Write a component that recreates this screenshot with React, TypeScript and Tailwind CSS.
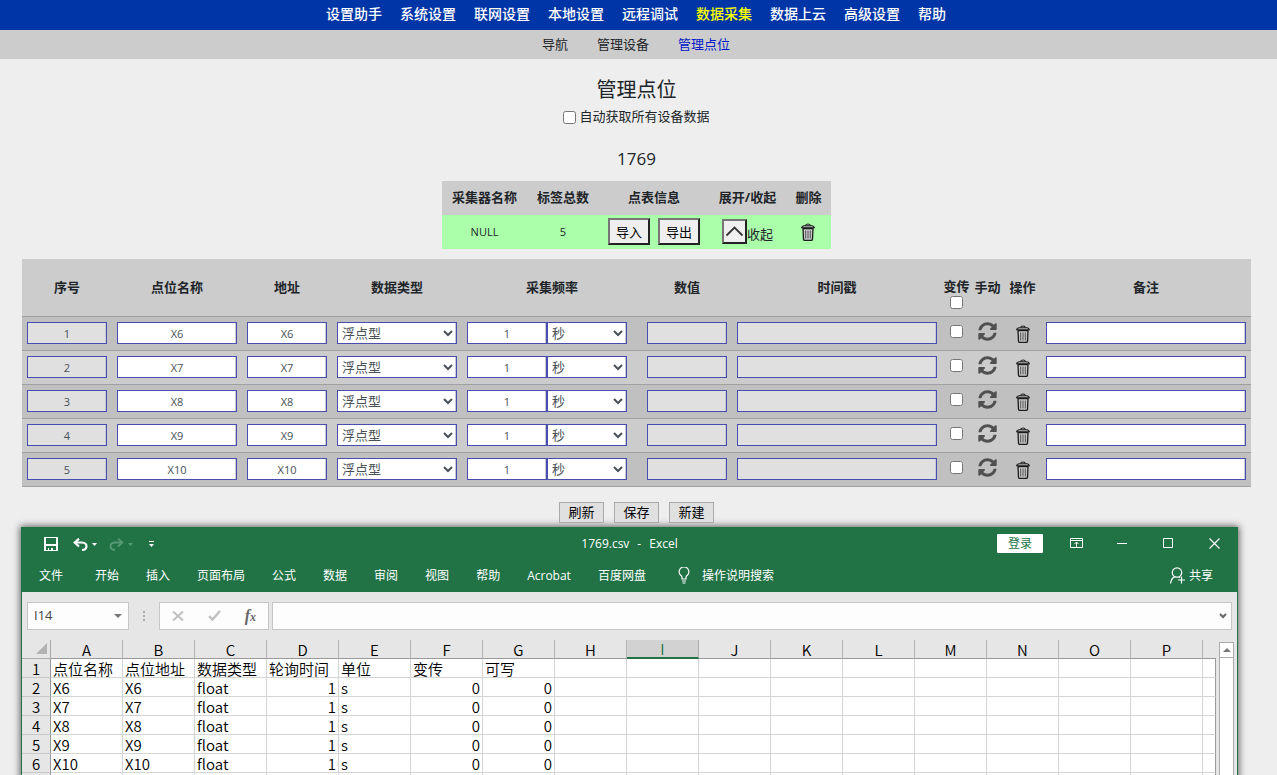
// App.tsx - Point management page with the exported csv opened in a spreadsheet window
import { useState } from "react";
import type { ReactNode } from "react";
import { FaSyncAlt } from "react-icons/fa";

const mainMenu = [
  "设置助手",
  "系统设置",
  "联网设置",
  "本地设置",
  "远程调试",
  "数据采集",
  "数据上云",
  "高级设置",
  "帮助",
];

const subMenu = ["导航", "管理设备", "管理点位"];

const points = ["X6", "X7", "X8", "X9", "X10"];

const ribbonTabs = [
  "开始",
  "插入",
  "页面布局",
  "公式",
  "数据",
  "审阅",
  "视图",
  "帮助",
  "Acrobat",
  "百度网盘",
];

const columns = "ABCDEFGHIJKLMNOP".split("");

const sheet: string[][] = [
  ["点位名称", "点位地址", "数据类型", "轮询时间", "单位", "变传", "可写"],
  ...points.map((p) => [p, p, "float", "1", "s", "0", "0"]),
];

const fieldClass =
  "block h-[22px] w-full min-w-0 rounded-none border border-[#4a4db0] text-[#495057] shadow-[inset_-1px_0_0_#c9c9d6]";

function TrashIcon() {
  return (
    <svg width="16" height="18" viewBox="0 0 16 18" fill="none">
      <path d="M3 5.5h10l-.5 10.6q-.1 1.3-1.3 1.3H4.8q-1.2 0-1.3-1.3z" fill="#c8c8c8" stroke="#1c1c1c" strokeWidth="1.3" />
      <path d="M5.7 7.5v8M8 7.5v8M10.300 7.5v8" stroke="#333" strokeWidth=".8" />
      <path d="M1.6 4.8Q2 3 4 2.8h8q2 .2 2.4 2z" fill="#bbb" stroke="#1c1c1c" strokeWidth="1.1" />
      <path d="M5.6 2.5Q6 1 8 1t2.4 1.5" stroke="#1c1c1c" strokeWidth="1.1" />
    </svg>
  );
}

function BevelButton({ children }: { children: ReactNode }) {
  return (
    <button className="h-[27px] w-[42px] border-2 border-t-[#767676] border-l-[#767676] border-r-[#222] border-b-[#222] bg-[#efefef] text-[13px] leading-5 text-black">
      {children}
    </button>
  );
}

function DeviceTable({ open, onToggle }: { open: boolean; onToggle: () => void }) {
  return (
    <table className="mx-auto mt-[7px] w-[389px] table-fixed text-center text-[13px]">
      <thead>
        <tr className="h-[34px] bg-[#ccc]">
          <th className="w-[85px]">采集器名称</th>
          <th className="w-[72px]">标签总数</th>
          <th className="w-[110px]">点表信息</th>
          <th className="w-[77px]">展开/收起</th>
          <th className="w-[45px]">删除</th>
        </tr>
      </thead>
      <tbody>
        <tr className="h-[34px] bg-[#abffab]">
          <td className="text-[11px]">NULL</td>
          <td className="text-[11px]">5</td>
          <td className="pb-px">
            <div className="flex justify-center gap-2">
              <BevelButton>导入</BevelButton>
              <BevelButton>导出</BevelButton>
            </div>
          </td>
          <td className="pb-[2px]">
            <div className="flex items-end justify-center">
              <button
                aria-label="收起"
                onClick={onToggle}
                className="flex size-[25px] items-center justify-center border-2 border-t-[#767676] border-l-[#767676] border-r-[#222] border-b-[#222] bg-[#efefef]"
              >
                <svg width="19" height="12" viewBox="0 0 19 12" className={open ? "" : "rotate-180"}>
                  <path d="M1.5 10.5l8-8 8 8" fill="none" stroke="#333" strokeWidth="1.8" />
                </svg>
              </button>
              <span className="leading-5">收起</span>
            </div>
          </td>
          <td className="pr-[2px]">
            <button aria-label="删除" className="mx-auto block">
              <TrashIcon />
            </button>
          </td>
        </tr>
      </tbody>
    </table>
  );
}

function PointRow({ name, index }: { name: string; index: number }) {
  return (
    <tr className="h-[34px] border-b border-[#a0a0a0] odd:bg-[#c0c0c0] even:bg-[#ccc]">
      <td className="px-[5px]">
        <input aria-label="序号" readOnly value={index + 1} className={`${fieldClass} bg-[#e0e0e0] text-center`} />
      </td>
      <td className="px-[5px]">
        <input aria-label="点位名称" defaultValue={name} className={`${fieldClass} bg-white text-center`} />
      </td>
      <td className="px-[5px]">
        <input aria-label="地址" defaultValue={name} className={`${fieldClass} bg-white text-center`} />
      </td>
      <td className="px-[5px]">
        <select aria-label="数据类型" className={`${fieldClass} bg-white text-[13px]`}>
          <option>浮点型</option>
        </select>
      </td>
      <td className="pr-[15px] pl-[5px]">
        <div className="flex">
          <input aria-label="采集频率" defaultValue="1" className={`${fieldClass} bg-white text-center`} />
          <select aria-label="频率单位" className={`${fieldClass} bg-white text-[13px]`}>
            <option>秒</option>
          </select>
        </div>
      </td>
      <td className="px-[5px]">
        <input aria-label="数值" readOnly className={`${fieldClass} bg-[#e0e0e0]`} />
      </td>
      <td className="px-[5px]">
        <input aria-label="时间戳" readOnly className={`${fieldClass} bg-[#e0e0e0]`} />
      </td>
      <td className="pb-1">
        <input type="checkbox" aria-label="变传" className="mx-auto block" />
      </td>
      <td className="pb-1">
        <button aria-label="手动" className="mx-auto block text-[#505050]">
          <FaSyncAlt size={19} />
        </button>
      </td>
      <td className="pt-[2px]">
        <button aria-label="操作" className="mx-auto block">
          <TrashIcon />
        </button>
      </td>
      <td className="px-[5px]">
        <input aria-label="备注" className={`${fieldClass} bg-white`} />
      </td>
    </tr>
  );
}

function PointTable() {
  return (
    <div className="mt-[10px] px-[22px]">
      <table className="w-full table-fixed text-[11px]">
        <thead className="text-[13px]">
          <tr className="h-[57px] border-b border-[#a0a0a0] bg-[#ccc]">
            <th className="w-[90px]">序号</th>
            <th className="w-[130px]">点位名称</th>
            <th className="w-[90px]">地址</th>
            <th className="w-[130px]">数据类型</th>
            <th className="w-[180px]">采集频率</th>
            <th className="w-[90px]">数值</th>
            <th className="w-[210px]">时间戳</th>
            <th className="w-[29px] pt-[17px] align-top">
              <label className="flex flex-col items-center leading-5">
                变传
                <input type="checkbox" />
              </label>
            </th>
            <th className="w-[33px]">手动</th>
            <th className="w-[37px]">操作</th>
            <th className="w-[210px]">备注</th>
          </tr>
        </thead>
        <tbody>
          {points.map((p, i) => (
            <PointRow key={p} name={p} index={i} />
          ))}
        </tbody>
      </table>
    </div>
  );
}

function Caret() {
  return (
    <svg width="5" height="3" viewBox="0 0 5 3" fill="currentColor">
      <path d="M0 0h5L2.5 3z" />
    </svg>
  );
}

function TitleBar() {
  const windowButton = "flex h-full w-[46px] items-center justify-center";
  return (
    <div className="grid h-[33px] grid-cols-[1fr_auto_1fr] items-center">
      <div className="flex items-center pt-[2px] pl-[22px]">
        <button aria-label="保存">
          <svg width="14" height="14" viewBox="0 0 14 14" fill="#fff" fillRule="evenodd">
            <path d="M0 0h14v14H0zM2 1h10v6H2zM2 9h10v4H9v-2H7v2H5v-2H4v2H2z" />
          </svg>
        </button>
        <button aria-label="撤消" className="ml-[15px] flex items-center gap-1">
          <svg width="15" height="13" viewBox="0 0 15 13" fill="none" stroke="#fff" strokeWidth="2.2">
            <path d="M2 4.5h7q4.5.3 4.5 3.8T9 12" />
            <path d="M6 .7L1.7 4.6 6 8.5" />
          </svg>
          <Caret />
        </button>
        <button aria-label="恢复" className="ml-3 flex items-center gap-1 text-[#579a76]">
          <svg width="15" height="13" viewBox="0 0 15 13" fill="none" stroke="currentColor" strokeWidth="1.8">
            <path d="M13 4.5H6Q1.5 4.8 1.5 8.3T6 12" />
            <path d="M9 .7l4.3 3.9L9 8.5" />
          </svg>
          <Caret />
        </button>
        <button aria-label="自定义快速访问工具栏" className="ml-4">
          <svg width="5" height="6" viewBox="0 0 5 6" fill="#fff">
            <path d="M0 0h5v1H0zM0 3h5L2.5 6z" />
          </svg>
        </button>
      </div>
      <div className="flex gap-2 pt-px text-xs">
        <span>1769.csv</span>
        <span>-</span>
        <span>Excel</span>
      </div>
      <div className="flex h-full items-center justify-end">
        <button className="mr-[10px] h-[19px] w-[46px] rounded-[1px] bg-white text-xs leading-[19px] text-[#217346]">
          登录
        </button>
        <button aria-label="功能区显示选项" className={windowButton}>
          <svg width="13" height="10" viewBox="0 0 13 10" fill="none" stroke="#fff">
            <path d="M.5.5h12v9H.5zM.5 2.5h12M6.5 9V4M4.5 6l2-2 2 2" />
          </svg>
        </button>
        <button aria-label="最小化" className={windowButton}>
          <svg width="10" height="1">
            <path d="M0 .5h10" stroke="#fff" />
          </svg>
        </button>
        <button aria-label="最大化" className={windowButton}>
          <svg width="10" height="10">
            <path d="M.5.5h9v9h-9z" fill="none" stroke="#fff" />
          </svg>
        </button>
        <button aria-label="关闭" className={windowButton}>
          <svg width="11" height="11" viewBox="0 0 11 11">
            <path d="M.5.5l10 10M10.5.5l-10 10" stroke="#fff" strokeWidth="1.2" />
          </svg>
        </button>
      </div>
    </div>
  );
}

function Ribbon() {
  return (
    <div className="flex h-8 items-center pr-6 pl-[17px] text-xs">
      <button className="mr-8">文件</button>
      <div className="flex gap-[27px]">
        {ribbonTabs.map((tab) => (
          <button key={tab}>{tab}</button>
        ))}
      </div>
      <button className="ml-8 flex items-center gap-3">
        <svg width="12" height="17" viewBox="0 0 12 17" fill="none" stroke="#fff" strokeWidth="1.2">
          <path d="M4 12v-1.5Q4 9 2.6 8.3A4.9 4.9 0 1 1 9.4 8.3Q8 9 8 10.5V12zM4 14h4M4.5 16h3" />
        </svg>
        操作说明搜索
      </button>
      <button className="ml-auto flex items-center gap-1">
        <svg width="15" height="17" viewBox="0 0 15 17" fill="none" stroke="#fff" strokeWidth="1.2">
          <circle cx="7" cy="5.5" r="4.7" />
          <path d="M.6 16.5Q1 11.5 4.8 9.6M9 9.8l1 .9" />
          <path d="M11.5 9.5v7M8 13h7" />
        </svg>
        共享
      </button>
    </div>
  );
}

function FormulaBar() {
  return (
    <div className="flex h-12 items-center px-[5px]">
      <div className="flex h-7 w-[102px] items-center border border-[#c6c6c6] bg-[#fdfdfd] px-[6px]">
        <input aria-label="名称框" defaultValue="I14" className="w-full min-w-0 bg-transparent text-[13px] text-[#444]" />
        <svg width="8" height="4" viewBox="0 0 8 4" className="shrink-0" fill="#777">
          <path d="M0 0h8L4 4z" />
        </svg>
      </div>
      <svg width="30" height="12" viewBox="0 0 30 12" fill="#aaa">
        <path d="M14 1h2v2h-2zM14 5h2v2h-2zM14 9h2v2h-2z" />
      </svg>
      <div className="flex h-7 w-[110px] items-center justify-around border border-[#c6c6c6] bg-[#fdfdfd]">
        <button aria-label="取消">
          <svg width="12" height="10" viewBox="0 0 12 10">
            <path d="M1 .5l10 9M11 .5l-10 9" stroke="#c0c0c0" strokeWidth="2" />
          </svg>
        </button>
        <button aria-label="输入">
          <svg width="13" height="11" viewBox="0 0 13 11">
            <path d="M1 6l3.5 3.5L12 1" fill="none" stroke="#c0c0c0" strokeWidth="2.4" />
          </svg>
        </button>
        <button
          aria-label="插入函数"
          className="font-['Liberation_Serif',serif] text-base leading-5 font-bold text-[#666] italic"
        >
          f<span className="text-xs">x</span>
        </button>
      </div>
      <div className="ml-[3px] flex h-7 flex-1 items-center border border-[#c6c6c6] bg-[#fdfdfd] pr-1">
        <input aria-label="编辑栏" className="h-full min-w-0 flex-1 bg-transparent px-1 text-[13px]" />
        <svg width="8" height="6" viewBox="0 0 8 6">
          <path d="M1 1l3 3 3-3" fill="none" stroke="#666" strokeWidth="2" />
        </svg>
      </div>
    </div>
  );
}

function Sheet() {
  return (
    <div className="flex pr-[3px] font-['Noto_Sans_CJK_SC',sans-serif] text-[15px] leading-4 font-[350] text-black">
      <table className="min-w-0 flex-1 table-fixed border-separate border-spacing-0">
        <thead>
          <tr className="h-[19px]">
            <th className="w-[29px] border-r border-b border-[#ababab] p-0">
              <svg width="11" height="11" viewBox="0 0 11 11" className="mr-[3px] ml-auto block">
                <path d="M11 0v11H0z" fill="#b2b2b2" />
              </svg>
            </th>
            {columns.map((c) => (
              <th
                key={c}
                className={
                  c === "I"
                    ? "w-[72px] border-r border-b-2 border-r-[#ababab] border-b-[#217346] bg-[#d2d2d2] px-0 pt-px pb-0 font-[350] text-[#217346]"
                    : "w-[72px] border-r border-b border-r-[#b4b4b4] border-b-[#999] px-0 pt-[2px] pb-0 font-[350]"
                }
              >
                {c}
              </th>
            ))}
            <th className="w-[13px] border-b border-[#999] p-0" />
          </tr>
        </thead>
        <tbody>
          {sheet.map((row, r) => (
            <tr key={r} className="h-[19px]">
              <th className="border-r border-b border-r-[#999] border-b-[#c8c8c8] px-0 pt-[2px] pb-0 font-[350]">
                {r + 1}
              </th>
              {columns.map((c, i) => (
                <td
                  key={c}
                  className={`border-r border-b border-[#d4d4d4] bg-white px-[2px] pt-[2px] pb-0 whitespace-nowrap ${
                    /^\d+$/.test(row[i] ?? "") ? "text-right" : "text-left"
                  }`}
                >
                  {row[i]}
                </td>
              ))}
              <td className="border-r border-b border-r-[#999] border-b-[#d4d4d4] bg-white p-0" />
            </tr>
          ))}
          {/* first empty row, holds the quick action box under the data */}
          <tr className="h-[19px]">
            <th className="border-r border-[#999] p-0" />
            {columns.map((c) => (
              <td key={c} className="border-r border-[#d4d4d4] bg-white px-px pt-px pb-0">
                {c === "H" && <div className="h-4 w-5 border border-[#ababab] bg-[#f3f3f3]" />}
              </td>
            ))}
            <td className="border-r border-[#999] bg-white p-0" />
          </tr>
        </tbody>
      </table>
      <div className="mt-[2px] ml-[3px] flex w-[15px] flex-col">
        <button
          aria-label="向上滚动"
          className="flex h-4 w-full items-center justify-center border border-[#ababab] bg-white"
        >
          <svg width="8" height="4" viewBox="0 0 8 4">
            <path d="M4 0l4 4H0z" fill="#777" />
          </svg>
        </button>
        <div className="-mt-px flex-1 border border-[#ababab] bg-white" />
      </div>
    </div>
  );
}

export default function App() {
  const [open, setOpen] = useState(true);

  return (
    <div className="h-screen overflow-hidden bg-[#eee] font-['Open_Sans','Noto_Sans_CJK_SC',sans-serif] text-[13px] text-[#212529]">
      <nav className="flex h-[30px] items-center justify-center gap-[18px] bg-[#0035a8] pr-[5px] pb-[2px] text-sm font-medium text-white">
        {mainMenu.map((item) => (
          <a key={item} href="#" className={item === "数据采集" ? "text-[#ff0]" : ""}>
            {item}
          </a>
        ))}
      </nav>
      <nav className="flex h-[29px] items-center justify-center gap-[29px] bg-[#ccc] pr-[5px]">
        {subMenu.map((item) => (
          <a key={item} href="#" className={item === "管理点位" ? "text-[#0018c8]" : ""}>
            {item}
          </a>
        ))}
      </nav>

      <main className="pr-1">
        <h1 className="pt-4 text-center text-xl leading-[30px]">管理点位</h1>
        <label className="flex h-6 items-center justify-center gap-[3px]">
          <input type="checkbox" />
          自动获取所有设备数据
        </label>
        <h2 className="mt-4 text-center text-[17px] leading-7">1769</h2>

        <div className="pt-px">
          <DeviceTable open={open} onToggle={() => setOpen(!open)} />
        </div>
        {open && <PointTable />}

        <div className="mt-[15px] flex justify-center gap-[10px]">
          {["刷新", "保存", "新建"].map((label) => (
            <button key={label} className="h-[21px] w-[45px] border border-[#aaa] bg-[#e0e0e0] leading-[19px] text-black">
              {label}
            </button>
          ))}
        </div>
      </main>

      <section className="mt-1 mr-[39px] ml-[21px] border-x border-[#217346] bg-[#e6e6e6] shadow-[0_0_7px_1px_rgba(0,0,0,0.6)]">
        <header className="bg-[#217346] text-white">
          <TitleBar />
          <Ribbon />
        </header>
        <FormulaBar />
        <Sheet />
      </section>
    </div>
  );
}
